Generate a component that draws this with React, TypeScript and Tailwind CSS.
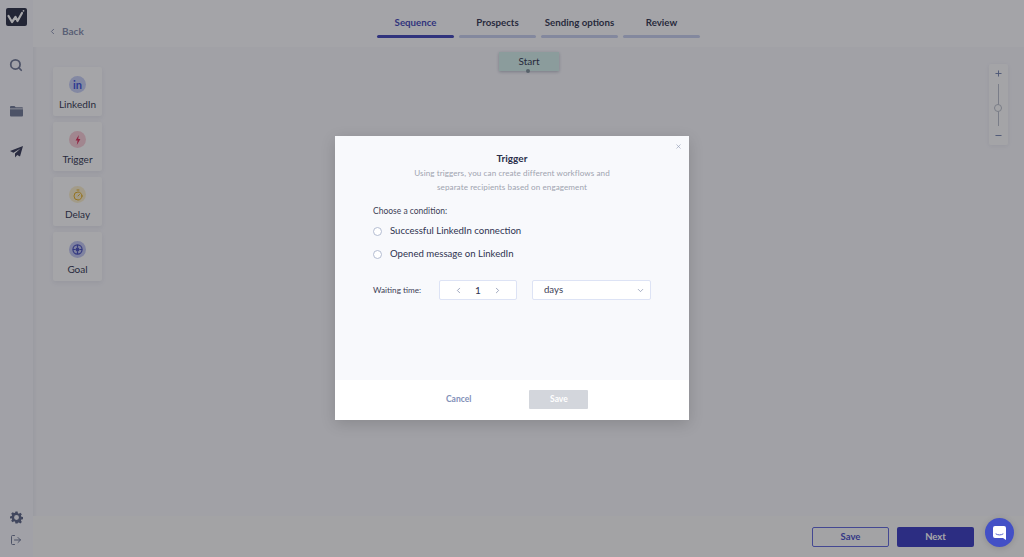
import { ChevronDown, ChevronLeft, ChevronRight, LogOut, Minus, Plus, Search, X, Timer } from "lucide-react";

const TABS = ["Sequence", "Prospects", "Sending options", "Review"];

const Logo = () => (
  <svg width="21" height="18" viewBox="0 0 21 18">
    <rect width="21" height="18" rx="2" fill="#24283f" />
    <path d="M2.5 8 L6 14 L9.5 9 L11.5 13 L16 5" fill="none" stroke="#fff" strokeWidth="2.2" strokeLinecap="round" strokeLinejoin="round" />
    <circle cx="17.5" cy="2.8" r="0.9" fill="#fff" />
  </svg>
);

const FolderIcon = () => (
  <svg width="13" height="12" viewBox="0 0 13 12" fill="#6a7390">
    <path d="M0 2 a1 1 0 0 1 1-1 h3.5 l1.2 1.3 H12 a1 1 0 0 1 1 1 V3.6 H0 Z" />
    <path d="M0 4.3 h13 V10.5 a1 1 0 0 1-1 1 H1 a1 1 0 0 1-1-1 Z" />
  </svg>
);

const PlaneIcon = () => (
  <svg width="13" height="12" viewBox="0 0 13 12" fill="#2f3350">
    <path d="M13 0 L0 5 L3.4 6.8 L10.5 2.4 L5 7.6 L5 11.5 L7.2 9 L10 10.6 Z" />
  </svg>
);

const GearIcon = () => (
  <svg width="13" height="13" viewBox="0 0 24 24" fill="#565f80">
    <path fillRule="evenodd" d="M10 1h4l.6 3.1 1.9.8 2.6-1.8 2.8 2.8-1.8 2.6.8 1.9 3.1.6v4l-3.1.6-.8 1.9 1.8 2.6-2.8 2.8-2.6-1.8-1.9.8L14 23h-4l-.6-3.1-1.9-.8-2.6 1.8-2.8-2.8 1.8-2.6-.8-1.9L0 14v-4l3.1-.6.8-1.9L2.1 4.9l2.8-2.8 2.6 1.8 1.9-.8L10 1Zm2 6.5a4.5 4.5 0 1 0 0 9 4.5 4.5 0 0 0 0-9Z" />
  </svg>
);

const BoltIcon = () => (
  <svg width="6" height="10" viewBox="0 0 6 10" fill="#d8234f">
    <path d="M3.8 0 L0.6 5.4 H2.6 L1.8 10 L5.4 4 H3.2 Z" />
  </svg>
);

const GoalIcon = () => (
  <svg width="11" height="11" viewBox="0 0 12 12" fill="none" stroke="#3f47b8" strokeWidth="1.3">
    <circle cx="6" cy="6" r="5" />
    <circle cx="6" cy="6" r="1.4" fill="#3f47b8" />
    <path d="M6 1v3M6 8v3M1 6h3M8 6h3" />
  </svg>
);

const PALETTE = [
  { label: "LinkedIn", tint: "bg-[#c3cbf2]", icon: <span className="text-[11px] leading-none font-bold text-[#3348d8]">in</span> },
  { label: "Trigger", tint: "bg-[#f5c8d2]", icon: <BoltIcon /> },
  { label: "Delay", tint: "bg-[#f7ecc8]", icon: <Timer size={12} className="text-[#e2a818]" /> },
  { label: "Goal", tint: "bg-[#bcc1ee]", icon: <GoalIcon /> },
];

const App = () => {
  return (
    <div className="relative flex h-screen w-screen overflow-hidden bg-[#f5f5f9] font-['Lato',sans-serif] text-[#2b2f4a]">
      {/* Sidebar */}
      <aside className="flex w-[33px] shrink-0 flex-col items-center bg-[#f6f6fa] pt-[8px] pr-[1px] pb-[11px] shadow-[1px_0_4px_rgba(40,50,90,0.07)]">
        <Logo />
        <Search size={14} strokeWidth={3} className="mt-[32px] text-[#6a7390]" />
        <div className="mt-[33px]">
          <FolderIcon />
        </div>
        <div className="mt-[29px]">
          <PlaneIcon />
        </div>
        <div className="mt-auto">
          <GearIcon />
        </div>
        <LogOut size={12} className="mt-[10px] text-[#6a7390]" />
      </aside>

      <main className="flex min-w-0 flex-1 flex-col">
        {/* Header */}
        <header className="flex h-[47px] shrink-0 items-start bg-[#fbfbfc]">
          <div className="flex w-[344px] shrink-0 items-center pt-[25px] pl-[15px] text-[#7f88a8]">
            <ChevronLeft size={9} strokeWidth={2.5} />
            <span className="ml-[5px] text-[10px] leading-[12px] font-bold">Back</span>
          </div>
          <nav className="flex gap-[5px]">
            {TABS.map((tab, i) => (
              <div key={tab} className="flex w-[77px] flex-col items-center pt-[16px]">
                <span className={`whitespace-nowrap text-[9.7px] leading-[12px] font-bold ${i === 0 ? "text-[#3a3fb4]" : "text-[#2b2f4a]"}`}>{tab}</span>
                <div className={`mt-[7px] h-[2.5px] w-full rounded-full ${i === 0 ? "bg-[#3a3fb4]" : "bg-[#c3cbec]"}`} />
              </div>
            ))}
          </nav>
        </header>

        {/* Canvas */}
        <section className="relative flex-1">
          <div className="flex w-[49px] translate-x-[20px] flex-col gap-[6px] pt-[20px]">
            {PALETTE.map((item) => (
              <div key={item.label} className="flex h-[49px] flex-col items-center rounded-[2px] bg-[#fcfcfc] pt-[9px] shadow-[0_2px_5px_rgba(40,50,90,0.08)]">
                <div className={`flex h-[17px] w-[17px] items-center justify-center rounded-full ${item.tint}`}>{item.icon}</div>
                <span className="mt-[5px] text-[10px] leading-[12px]">{item.label}</span>
              </div>
            ))}
          </div>

          {/* Start node */}
          <div className="absolute top-[5px] left-[466px] flex h-[19px] w-[60px] items-center justify-center bg-[#d0ede8] pb-[1px] text-[10px] shadow-[0_1px_3px_rgba(30,40,70,0.3)]">
            Start
            <span className="absolute -bottom-[2px] left-[27px] h-[4px] w-[4px] rounded-full bg-[#7a8a95]" />
          </div>

          {/* Zoom control */}
          <div className="absolute top-[17px] right-[16px] flex h-[81px] w-[19px] flex-col items-center rounded-[2px] bg-[#fbfbfb] pt-[5px] shadow-[0_1px_4px_rgba(40,50,90,0.08)]">
            <Plus size={9} strokeWidth={2.5} className="text-[#6a7aa8]" />
            <div className="relative mt-[6px] h-[42px] w-[1.5px] bg-[#b5bac6]">
              <span className="absolute top-[20px] -left-[3.5px] h-[8px] w-[8px] rounded-full border border-[#b5bac6] bg-[#fbfbfb]" />
            </div>
            <Minus size={9} strokeWidth={2.5} className="mt-[5px] text-[#6a7aa8]" />
          </div>
        </section>

        {/* Footer */}
        <footer className="flex h-[41px] shrink-0 items-start justify-end gap-[8px] bg-[#f9f9f7] pt-[11px] pr-[50px]">
          <button className="h-[20px] w-[77px] rounded-[2px] border border-[#5a62d8] text-[9.5px] font-bold text-[#3f47c4]">Save</button>
          <button className="h-[20px] w-[77px] rounded-[2px] bg-[#3235bc] text-[9.5px] font-bold text-white">Next</button>
        </footer>
      </main>

      {/* Modal overlay */}
      <div className="absolute inset-0 flex items-start justify-center bg-[#22222a]/40 pt-[136px]">
        <div className="flex h-[284px] w-[354px] flex-col bg-white shadow-[0_4px_14px_rgba(0,0,0,0.15)]">
          <div className="relative flex-1 bg-[#f8f9fc] px-[38px] pt-[16px]">
            <X size={7} strokeWidth={2} className="absolute top-[7px] right-[7px] text-[#8b96b0]" />
            <h2 className="text-center text-[10px] leading-[12px] font-bold text-[#2b2f4a]">Trigger</h2>
            <p className="mt-[3px] text-center text-[8.1px] leading-[13.5px] tracking-[0.01em] text-[#a0a4b0]">
              Using triggers, you can create different workflows and
              <br />
              separate recipients based on engagement
            </p>
            <p className="mt-[11px] text-[8.5px] leading-[12px] text-[#3d4156]">Choose a condition:</p>
            <label className="mt-[3px] flex h-[23px] items-center">
              <span className="h-[9px] w-[9px] rounded-full border border-[#b4bdd2] bg-white" />
              <span className="ml-[8px] text-[9.6px] text-[#2f3350]">Successful LinkedIn connection</span>
            </label>
            <label className="flex h-[23px] items-center">
              <span className="h-[9px] w-[9px] rounded-full border border-[#b4bdd2] bg-white" />
              <span className="ml-[8px] text-[9.6px] text-[#2f3350]">Opened message on LinkedIn</span>
            </label>
            <div className="mt-[14px] flex items-center">
              <span className="w-[66px] text-[8.2px] text-[#3d4156]">Waiting time:</span>
              <div className="flex h-[20px] w-[78px] items-center justify-between rounded-[2px] border border-[#dde3f5] bg-white px-[14px] text-[10px] text-[#2f3350]">
                <ChevronLeft size={9} className="text-[#7f8aa8]" />
                <span>1</span>
                <ChevronRight size={9} className="text-[#7f8aa8]" />
              </div>
              <div className="ml-[15px] flex h-[20px] w-[119px] items-center justify-between rounded-[2px] border border-[#dde3f5] bg-white pr-[5px] pl-[11px] text-[9.6px] text-[#3d4156]">
                <span>days</span>
                <ChevronDown size={9} className="text-[#8b96b0]" />
              </div>
            </div>
          </div>
          <div className="flex h-[40px] shrink-0 items-center bg-white pb-[2px] pl-[111px]">
            <span className="text-[8.5px] font-bold text-[#8390b8]">Cancel</span>
            <button className="ml-[58px] h-[19px] w-[59px] rounded-[1px] bg-[#d3d6dc] text-[8.5px] font-bold text-white">Save</button>
          </div>
        </div>
      </div>

      {/* Chat launcher */}
      <button className="absolute right-[10px] bottom-[10px] flex h-[29px] w-[29px] items-center justify-center rounded-full bg-[#4350c6] shadow-[0_1px_6px_rgba(0,0,0,0.15)]">
        <svg width="13" height="14" viewBox="0 0 13 14">
          <path d="M2 0h9a2 2 0 0 1 2 2v12l-3-2H2a2 2 0 0 1-2-2V2a2 2 0 0 1 2-2Z" fill="#fff" />
          <path d="M3 8c2 1.3 5 1.3 7 0" fill="none" stroke="#4350c6" strokeWidth="0.9" strokeLinecap="round" />
        </svg>
      </button>
    </div>
  );
};

export default App;
